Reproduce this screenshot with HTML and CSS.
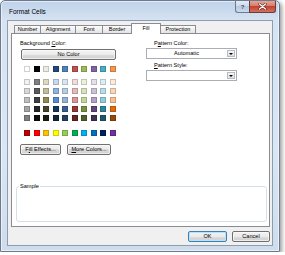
FILE: index.html
```html
<!DOCTYPE html>
<html lang="en">
<head>
    <meta charset="UTF-8">
    <title>Format Cells</title>
    <link rel="stylesheet" href="styles.css">
</head>
<body>

    <div class="window">
        <!-- Barra de titulo -->
        <div class="titlebar">
            <span class="title">Format Cells</span>
            <div class="caption-buttons">
                <button class="cap-btn help">?</button>
                <button class="cap-btn close">
                    <svg width="9" height="7" viewBox="0 0 9 7">
                        <path d="M1.5 1 L7.5 6 M7.5 1 L1.5 6" stroke="#5a2a24" stroke-width="2.4" stroke-linecap="round"/>
                        <path d="M1.5 1 L7.5 6 M7.5 1 L1.5 6" stroke="#fff" stroke-width="1.3" stroke-linecap="round"/>
                    </svg>
                </button>
            </div>
        </div>

        <div class="client">
            <!-- Pestañas -->
            <div class="tabs">
                <div class="tab">Number</div>
                <div class="tab">Alignment</div>
                <div class="tab">Font</div>
                <div class="tab">Border</div>
                <div class="tab active">Fill</div>
                <div class="tab">Protection</div>
            </div>

            <div class="panel">
                <div class="fill-grid">
                    <div class="col-left">
                        <div class="label">Background <u>C</u>olor:</div>
                        <button class="btn no-color">No Color</button>
                        <div class="swatches base" id="baseColors"></div>
                        <div class="swatches theme" id="themeColors"></div>
                        <div class="swatches standard" id="standardColors"></div>
                        <div class="btn-row">
                            <button class="btn btn-fill">F<u>i</u>ll Effects...</button>
                            <button class="btn btn-more"><u>M</u>ore Colors...</button>
                        </div>
                    </div>

                    <div class="col-right">
                        <div class="label">P<u>a</u>ttern Color:</div>
                        <div class="select">
                            <span class="select-value">Automatic</span>
                            <span class="select-arrow"></span>
                        </div>
                        <div class="label second"><u>P</u>attern Style:</div>
                        <div class="select">
                            <span class="select-value"></span>
                            <span class="select-arrow"></span>
                        </div>
                    </div>
                </div>

                <fieldset class="sample">
                    <legend>Sample</legend>
                    <div class="sample-box"></div>
                </fieldset>
            </div>

            <div class="dialog-buttons">
                <button class="btn default btn-ok">OK</button>
                <button class="btn btn-cancel">Cancel</button>
            </div>
        </div>
    </div>

    <script>
        // Paleta de colores del tema (Office)
        const baseColors = ['#ffffff', '#000000', '#eeece1', '#1f497d', '#4f81bd', '#c0504d', '#9bbb59', '#8064a2', '#4bacc6', '#f79646'];
        const themeColors = [
            ['#f2f2f2', '#7f7f7f', '#ddd9c3', '#c6d9f0', '#dbe5f1', '#f2dcdb', '#ebf1dd', '#e5e0ec', '#dbeef3', '#fdeada'],
            ['#d8d8d8', '#595959', '#c4bd97', '#8db3e2', '#b8cce4', '#e5b9b7', '#d7e3bc', '#ccc1d9', '#b7dde8', '#fbd5b5'],
            ['#bfbfbf', '#3f3f3f', '#938953', '#548dd4', '#95b3d7', '#d99694', '#c3d69b', '#b2a2c7', '#92cddc', '#fac08f'],
            ['#a5a5a5', '#262626', '#494429', '#17365d', '#366092', '#953734', '#76923c', '#5f497a', '#31859b', '#e36c09'],
            ['#7f7f7f', '#0c0c0c', '#1d1b10', '#0f243e', '#244061', '#632423', '#4f6128', '#3f3151', '#205867', '#974806']
        ];
        const standardColors = ['#c00000', '#ff0000', '#ffc000', '#ffff00', '#92d050', '#00b050', '#00b0f0', '#0070c0', '#002060', '#7030a0'];

        function fillSwatches(id, colors) {
            const box = document.getElementById(id);
            colors.forEach(color => {
                const cell = document.createElement('span');
                cell.className = 'swatch';
                cell.style.backgroundColor = color;
                box.appendChild(cell);
            });
        }

        fillSwatches('baseColors', baseColors);
        fillSwatches('themeColors', themeColors.flat());
        fillSwatches('standardColors', standardColors);
    </script>

</body>
</html>
```

FILE: styles.css
```css
body {
    margin: 0;
    background-color: #fff;
    font-family: "Liberation Sans", Arial, sans-serif;
    font-size: 5.6px;
    color: #000;
}

.window {
    box-sizing: border-box;
    width: 280px;
    height: 252px;
    padding: 0 6px 5px;
    display: flex;
    flex-direction: column;
    border: 1px solid #6b7a8c;
    border-radius: 5px 5px 0 0;
    background: linear-gradient(180deg, #bfd2ea 0, #d6e3f2 20px, #dbe6f3 60%, #cfdcec 100%);
    box-shadow: inset 0 0 0 1px rgba(255, 255, 255, 0.55), 2px 2px 4px rgba(0, 0, 0, 0.4);
}

/* Barra de titulo */
.titlebar {
    height: 19px;
    flex-shrink: 0;
    display: flex;
    align-items: flex-start;
    margin: 0 -3px 0 -6px;
}

.title {
    flex: 1;
    padding: 7px 0 0 8px;
    font-size: 6.5px;
    line-height: 8px;
}

.caption-buttons {
    display: flex;
}

.cap-btn {
    box-sizing: border-box;
    height: 12px;
    padding: 0;
    display: flex;
    align-items: center;
    justify-content: center;
    border: 1px solid #6d7c8f;
    border-top: none;
}

.help {
    width: 14px;
    border-right: none;
    border-radius: 0 0 0 3px;
    background: linear-gradient(#e4ecf6, #cbd9ea 50%, #b6c9e0 50%, #cadbef);
    color: #3d4d5f;
    font: bold 6px "Liberation Sans", Arial, sans-serif;
}

.close {
    width: 27px;
    border-color: #6e3b35;
    border-radius: 0 0 3px 0;
    background: linear-gradient(#e6a596, #d47866 50%, #c2432f 50%, #d4715b);
}

/* Area cliente */
.client {
    flex: 1;
    display: flex;
    flex-direction: column;
    background-color: #f0f0f0;
    border: 1px solid #8d9db1;
}

.tabs {
    display: flex;
    align-items: flex-end;
    height: 10px;
    margin: 2px 0 0 6px;
    position: relative;
    z-index: 1;
}

.tab {
    box-sizing: border-box;
    height: 8px;
    margin-left: -1px;
    border: 1px solid #898c95;
    border-bottom: none;
    border-radius: 1px 1px 0 0;
    background: linear-gradient(#fcfcfc, #e4e4e4);
    text-align: center;
    font-size: 5.5px;
    line-height: 7px;
}

.tab:nth-child(1) { width: 27px; margin-left: 0; }
.tab:nth-child(2) { width: 36px; }
.tab:nth-child(3) { width: 28px; }
.tab:nth-child(4) { width: 30px; }
.tab:nth-child(5) { width: 30px; }
.tab:nth-child(6) { width: 36px; }

.tab.active {
    height: 11px;
    margin-bottom: -1px;
    background: #fff;
    line-height: 9px;
}

.panel {
    flex: 1;
    margin: 0 2px 0 3px;
    padding: 6px 2px 4px 4px;
    display: flex;
    flex-direction: column;
    background-color: #fff;
    border: 1px solid #898c95;
}

.fill-grid {
    display: grid;
    grid-template-columns: 96px 91px;
    column-gap: 30px;
    margin-left: 4px;
}

.label {
    height: 7px;
    line-height: 7px;
    white-space: nowrap;
}

.col-right .label {
    padding-left: 8px;
}

.col-right .label.second {
    margin-top: 3px;
}

/* Botones */
.btn {
    box-sizing: border-box;
    height: 11px;
    padding: 0;
    font: inherit;
    line-height: 9px;
    color: #000;
    border: 1px solid #707070;
    border-radius: 2px;
    background: linear-gradient(#f2f2f2 0, #ebebeb 50%, #dddddd 50%, #cfcfcf 100%);
    box-shadow: inset 0 0 0 1px rgba(255, 255, 255, 0.6);
}

.btn.default {
    border-color: #3c7fb1;
    box-shadow: inset 0 0 0 1px #b6e3fb;
}

.no-color {
    display: block;
    width: 95px;
    margin: 2px 0 0 1px;
}

/* Paleta */
.swatches {
    display: grid;
    grid-template-columns: repeat(10, 6px);
    column-gap: 3.5px;
    row-gap: 3px;
    margin-left: 4px;
}

.swatches.base { margin-top: 6px; }
.swatches.theme { margin-top: 7px; }
.swatches.standard { margin-top: 9px; }

.swatch {
    box-sizing: border-box;
    width: 6px;
    height: 6px;
    border: 1px solid rgba(0, 0, 0, 0.18);
}

.btn-row {
    display: flex;
    gap: 6px;
    margin-top: 8px;
}

.btn-fill { width: 41px; }
.btn-more { width: 44px; }

/* Listas desplegables */
.select {
    box-sizing: border-box;
    display: flex;
    height: 11px;
    margin-top: 1px;
    background-color: #fff;
    border: 1px solid #abadb3;
}

.select-value {
    flex: 1;
    text-align: center;
    line-height: 9px;
}

.select-arrow {
    box-sizing: border-box;
    width: 8px;
    margin: 1px;
    display: flex;
    align-items: center;
    justify-content: center;
    border: 1px solid #b6bcc6;
    background: linear-gradient(#f6f6f6, #e0e0e0);
}

.select-arrow::after {
    content: "";
    border-left: 2px solid transparent;
    border-right: 2px solid transparent;
    border-top: 2px solid #000;
}

/* Muestra */
.sample {
    margin: auto 0 0;
    padding: 0 2px;
    min-width: 0;
    border: 1px solid #d5dfe5;
    border-radius: 3px;
}

.sample legend {
    padding: 0 1px;
    line-height: 7px;
}

.sample-box {
    height: 31px;
}

.dialog-buttons {
    display: flex;
    justify-content: flex-end;
    gap: 5px;
    margin: 4px 2px 3px 0;
}

.btn-ok { width: 39px; }
.btn-cancel { width: 38px; }
```
